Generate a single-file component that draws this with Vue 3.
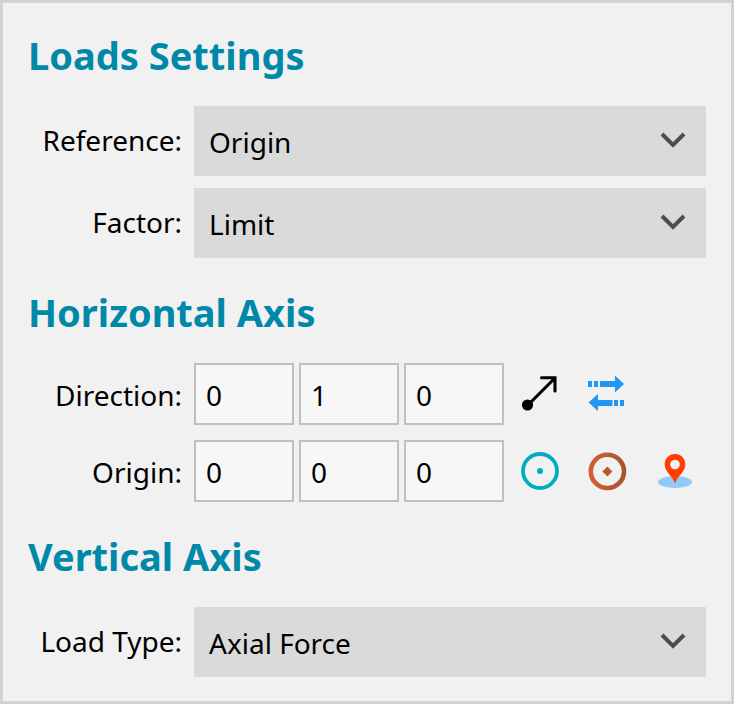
<template>
  <form class="panel" @submit.prevent>
    <section class="group">
      <h2 class="title">Loads Settings</h2>
      <div class="rows">
        <div class="row" v-for="item in settings" :key="item.id">
          <label class="label" :for="item.id">{{ item.label }}</label>
          <div class="select_wrapper">
            <select class="select" :id="item.id" v-model="item.value">
              <option v-for="opt in item.options" :key="opt">{{ opt }}</option>
            </select>
            <svg class="chevron" viewBox="0 0 26 16">
              <path d="M2 2 L13 13 L24 2" />
            </svg>
          </div>
        </div>
      </div>
    </section>

    <section class="group">
      <h2 class="title">Horizontal Axis</h2>
      <div class="rows vectors">
        <div class="row">
          <label class="label" for="direction0">Direction:</label>
          <div class="vector">
            <input
              v-for="(v, i) in direction"
              :key="i"
              :id="'direction' + i"
              :aria-label="'Direction ' + axes[i]"
              class="input"
              type="text"
              v-model="direction[i]"
            />
            <div class="tools">
              <button type="button" class="tool" aria-label="Pick direction">
                <svg viewBox="0 0 40 40">
                  <circle cx="7.500" cy="31" r="5.600" />
                  <path
                    d="M8 31 L34.500 4.500 M21.500 3.800 H35 V17"
                    fill="none"
                    stroke="#000"
                    stroke-width="3.100"
                    stroke-linecap="round"
                  />
                </svg>
              </button>
              <button
                type="button"
                class="tool"
                aria-label="Flip direction"
                @click="flip"
              >
                <svg viewBox="0 0 40 40" fill="#2196f3">
                  <path
                    d="M1 7 H5 V13 H1z M7 7 H11 V13 H7z M13 7 H28 V1.500 L37 10 L28 18.500 V13 H13z"
                  />
                  <path
                    d="M37 26 H33 V32 H37z M31 26 H27 V32 H31z M25.500 26 H11 V20 L1.500 28.500 L11 37 V32 H25.500z"
                  />
                </svg>
              </button>
            </div>
          </div>
        </div>
        <div class="row">
          <label class="label" for="origin0">Origin:</label>
          <div class="vector">
            <input
              v-for="(v, i) in origin"
              :key="i"
              :id="'origin' + i"
              :aria-label="'Origin ' + axes[i]"
              class="input"
              type="text"
              v-model="origin[i]"
            />
            <div class="tools">
              <button type="button" class="tool" aria-label="Circle center">
                <svg viewBox="0 0 40 40">
                  <circle
                    cx="20"
                    cy="20"
                    r="17"
                    fill="none"
                    stroke="#00acc1"
                    stroke-width="3.800"
                  />
                  <circle cx="20" cy="20" r="3" fill="#00acc1" />
                </svg>
              </button>
              <button type="button" class="tool" aria-label="Centroid">
                <svg viewBox="0 0 40 40">
                  <defs>
                    <linearGradient
                      id="ring"
                      gradientUnits="userSpaceOnUse"
                      x1="2"
                      y1="20"
                      x2="38"
                      y2="20"
                    >
                      <stop offset="0" stop-color="#d3602c" />
                      <stop offset="1" stop-color="#a4552f" />
                    </linearGradient>
                  </defs>
                  <circle
                    cx="20.400"
                    cy="20.400"
                    r="16.600"
                    fill="none"
                    stroke="url(#ring)"
                    stroke-width="4.600"
                  />
                  <path
                    d="M20.400 15.400 L25.400 20.400 L20.400 25.400 L15.400 20.400z"
                    fill="#b9592e"
                  />
                </svg>
              </button>
              <button type="button" class="tool" aria-label="Pick point">
                <svg viewBox="0 0 40 40">
                  <ellipse cx="21" cy="31" rx="17" ry="6" fill="#90caf9" />
                  <path
                    d="M21 3 C15 3 10.700 7.500 10.700 13.300 C10.700 21 18.500 25 21 32.500 C23.500 25 31.300 21 31.300 13.300 C31.300 7.500 27 3 21 3z"
                    fill="#ff3d00"
                  />
                  <circle cx="21" cy="13.500" r="4.800" fill="#f1f1f1" />
                </svg>
              </button>
            </div>
          </div>
        </div>
      </div>
    </section>

    <section class="group">
      <h2 class="title">Vertical Axis</h2>
      <div class="rows">
        <div class="row">
          <label class="label" for="loadType">Load Type:</label>
          <div class="select_wrapper">
            <select class="select" id="loadType" v-model="loadType">
              <option>Axial Force</option>
              <option>Shear Force</option>
              <option>Moment</option>
            </select>
            <svg class="chevron" viewBox="0 0 26 16">
              <path d="M2 2 L13 13 L24 2" />
            </svg>
          </div>
        </div>
      </div>
    </section>
  </form>
</template>

<script setup>
import { ref } from "vue";

const axes = ["X", "Y", "Z"];

const settings = ref([
  {
    id: "reference",
    label: "Reference:",
    value: "Origin",
    options: ["Origin", "Center"],
  },
  {
    id: "factor",
    label: "Factor:",
    value: "Limit",
    options: ["Limit", "Service"],
  },
]);

const direction = ref(["0", "1", "0"]);
const origin = ref(["0", "0", "0"]);
const loadType = ref("Axial Force");

const flip = () => {
  direction.value = direction.value.map((v) => String(-Number(v) || 0));
};
</script>

<style>
body {
  background: #f1f1f1;
}
</style>

<style scoped>
.panel {
  box-sizing: border-box;
  display: flex;
  flex-direction: column;
  gap: 30px;
  padding: 29px 26px 25px;
  border: 2px solid #d0d1d1;
  box-shadow: inset 0 0 0 1px #cbd8de;
  background: #f1f1f1;
  color: #000;
  font-family: "Noto Sans", "Open Sans", sans-serif;
  font-size: 28px;
}
.title {
  margin: 0 0 27px;
  font-size: 38px;
  line-height: 48px;
  font-weight: 700;
  color: #0088a8;
}
.rows {
  display: flex;
  flex-direction: column;
  gap: 12px;
}
.vectors {
  gap: 15px;
}
.row {
  display: grid;
  grid-template-columns: 154px 1fr;
  column-gap: 12px;
  align-items: center;
}
.label {
  padding-bottom: 2px;
  text-align: right;
  white-space: nowrap;
  line-height: 36px;
}
.vectors .label {
  padding: 2px 0 0;
}
.select_wrapper {
  position: relative;
}
.select {
  display: block;
  width: 100%;
  height: 70px;
  padding: 2px 60px 0 15px;
  border: 0;
  border-radius: 0;
  background: #dadada;
  color: inherit;
  font: inherit;
  appearance: none;
}
.chevron {
  position: absolute;
  right: 20px;
  top: 26px;
  width: 26px;
  height: 16px;
  pointer-events: none;
}
.chevron path {
  fill: none;
  stroke: #4d4d4d;
  stroke-width: 4;
}
.vector {
  display: flex;
  align-items: center;
  gap: 5px;
}
.input {
  box-sizing: border-box;
  width: 100px;
  height: 62px;
  padding: 2px 10px 0;
  border: 2px solid #c0c0c0;
  border-radius: 0;
  background: #f7f7f7;
  color: inherit;
  font: inherit;
}
.tools {
  display: flex;
  gap: 27px;
  margin-left: 11px;
}
.tool {
  width: 40px;
  height: 40px;
  padding: 0;
  border: 0;
  background: none;
  cursor: pointer;
}
.tool svg {
  display: block;
  width: 40px;
  height: 40px;
}
</style>
